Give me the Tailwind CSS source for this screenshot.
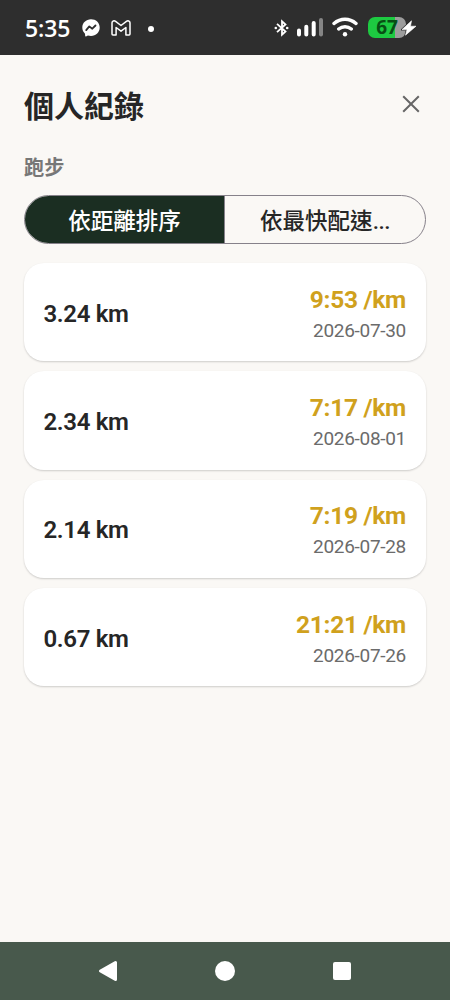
<!DOCTYPE html>
<html lang="zh-Hant">
<head>
<meta charset="utf-8">
<meta name="viewport" content="width=device-width, initial-scale=1">
<title>個人紀錄</title>
<script src="https://cdn.jsdelivr.net/npm/@tailwindcss/browser@4"></script>
</head>
<body class="bg-[#faf8f5]">
<div class="flex h-[1000px] w-[450px] flex-col overflow-hidden bg-[#faf8f5] font-['Roboto','Noto_Sans_CJK_TC',sans-serif] text-[#262626]">
  <header class="flex h-[55px] shrink-0 items-center bg-[#2e2e2e] pl-[25px] text-white">
    <span class="w-[57px] pt-px font-['Open_Sans',sans-serif] text-[23px] leading-[54px] font-semibold tracking-[-0.1px]">5:35</span>
    <svg class="mt-px h-[18px] w-[18px]" viewBox="0 0 18 18"><path fill="#fff" d="M9 .3C4 .3.3 3.900.3 8.600c0 2.500 1 4.600 2.700 6.100l.2 2.400c0 .4.4.6.8.4l1.900-.9c1 .3 2 .4 3.100.4 5 0 8.700-3.600 8.700-8.400S14 .3 9 .3z"/><path d="M4.200 11.100 7.300 7.400 10.300 9.700 13.500 6.500" fill="none" stroke="#2e2e2e" stroke-width="1.800" stroke-linecap="round" stroke-linejoin="round"/></svg>
    <svg class="mt-px ml-[11px] h-4 w-5" viewBox="0 0 20 16" fill="none" stroke="#fff" stroke-width="1.500" stroke-linejoin="round"><path d="M1 2.800C1 .8 3.200.3 4.600 1.400L10 5.500l5.400-4.100C16.800.3 19 .8 19 2.800V14c0 .6-.3.900-.9.900H14.900V7.500L10 11.200 5.100 7.500v7.400H1.900c-.6 0-.9-.3-.9-.9z"/></svg>
    <span class="mt-[2px] ml-[17px] size-[6px] rounded-full bg-white"></span>
    <svg class="ml-[120px] h-[18px] w-4" viewBox="0 0 16 18" fill="none" stroke="#fff" stroke-width="1.800"><path d="M3 4.800 11.500 12.500 8 15.700V2.300l3.500 3.200L3 13.200"/><circle cx="1.800" cy="9" r="1.300" fill="#fff" stroke="none"/><circle cx="13.200" cy="9" r="1.300" fill="#fff" stroke="none"/></svg>
    <svg class="ml-[6px] h-5 w-7" viewBox="0 0 28 20" stroke="#fff" stroke-width="4" stroke-linecap="round"><path d="M3 12.500V16.500M10.300 8.700V16.500M17.700 5V16.500"/><path d="M25 2V16.500" stroke="#858585"/></svg>
    <svg class="mb-px ml-[8px] h-5 w-[26px]" viewBox="0 0 26 20" fill="none" stroke="#fff" stroke-width="3.400" stroke-linecap="round"><path d="M2 6.500C8.500.9 17.500.9 24 6.500M6.700 12c3.700-3.100 8.900-3.100 12.600 0"/><circle cx="13" cy="17.300" r="2.200" fill="#fff" stroke="none"/></svg>
    <div class="relative ml-[10px] h-[21px] w-[49px]">
      <div class="flex h-[21px] w-[38px] items-center justify-center rounded-[7px] bg-linear-to-r from-[#1dca41] from-72% to-[#9c9c9c] to-72% font-['Open_Sans',sans-serif] text-[19px] leading-none font-bold text-[#084f14]">67</div>
      <svg class="absolute top-[3px] left-[33px] h-4 w-4" viewBox="0 0 16 16"><path d="M10.500.8 1 9.600h5L4.500 15.200 15 6.200H9.500z" fill="none" stroke="#2e2e2e" stroke-width="2"/><path d="M10.500.8 1 9.600h5L4.500 15.200 15 6.200H9.500z" fill="#fff" stroke="#fff" stroke-width=".6" stroke-linejoin="round"/></svg>
    </div>
  </header>
  <main class="flex flex-1 flex-col px-6">
    <div class="mt-[29px] flex h-[44px] items-center justify-between">
      <h1 class="text-[30px] leading-[43px] font-bold">個人紀錄</h1>
      <svg class="mr-[6px] mb-[4px] h-[18px] w-[18px]" viewBox="0 0 18 18" fill="none" stroke="#666" stroke-width="2"><path d="M1.200 1.200 16.800 16.800M16.800 1.200 1.200 16.800"/></svg>
    </div>
    <h2 class="mt-[25px] h-[30px] text-[20.200px] leading-[30px] font-semibold text-[#777]">跑步</h2>
    <div class="mt-[12px] flex h-[49px] w-[402px] shrink-0 overflow-hidden rounded-full border border-[#86818a] text-[22.500px] leading-[51px] font-medium">
      <button class="w-[200px] border-r border-[#86818a] bg-[#1b2e22] text-center text-white">依距離排序</button>
      <button class="flex-1 text-center">依最快配速<span class="tracking-[-0.5px]">...</span></button>
    </div>
    <ul class="mt-[19px] flex flex-col gap-[10px]">
      <li class="flex h-[98.300px] items-center justify-between rounded-[20px] bg-white pt-[3px] pr-[20px] pl-[19.500px] shadow-[0_1px_2px_rgba(0,0,0,0.18)]">
        <span class="text-[24px] font-semibold tracking-[-0.35px]">3.24 km</span>
        <div class="pt-[2px] text-right"><div class="text-[24.500px] leading-[32px] font-bold tracking-[-0.3px] text-[#d0a11d]">9:53 /km</div><div class="text-[19px] leading-[30px] tracking-[-0.300px] text-[#6b6b6b]">2026-07-30</div></div>
      </li>
      <li class="flex h-[98.300px] items-center justify-between rounded-[20px] bg-white pt-[3px] pr-[20px] pl-[19.500px] shadow-[0_1px_2px_rgba(0,0,0,0.18)]">
        <span class="text-[24px] font-semibold tracking-[-0.35px]">2.34 km</span>
        <div class="pt-[2px] text-right"><div class="text-[24.500px] leading-[32px] font-bold tracking-[-0.3px] text-[#d0a11d]">7:17 /km</div><div class="text-[19px] leading-[30px] tracking-[-0.300px] text-[#6b6b6b]">2026-08-01</div></div>
      </li>
      <li class="flex h-[98.300px] items-center justify-between rounded-[20px] bg-white pt-[3px] pr-[20px] pl-[19.500px] shadow-[0_1px_2px_rgba(0,0,0,0.18)]">
        <span class="text-[24px] font-semibold tracking-[-0.35px]">2.14 km</span>
        <div class="pt-[2px] text-right"><div class="text-[24.500px] leading-[32px] font-bold tracking-[-0.3px] text-[#d0a11d]">7:19 /km</div><div class="text-[19px] leading-[30px] tracking-[-0.300px] text-[#6b6b6b]">2026-07-28</div></div>
      </li>
      <li class="flex h-[98.300px] items-center justify-between rounded-[20px] bg-white pt-[3px] pr-[20px] pl-[19.500px] shadow-[0_1px_2px_rgba(0,0,0,0.18)]">
        <span class="text-[24px] font-semibold tracking-[-0.35px]">0.67 km</span>
        <div class="pt-[2px] text-right"><div class="text-[24.500px] leading-[32px] font-bold tracking-[-0.3px] text-[#d0a11d]">21:21 /km</div><div class="text-[19px] leading-[30px] tracking-[-0.300px] text-[#6b6b6b]">2026-07-26</div></div>
      </li>
    </ul>
  </main>
  <nav class="flex h-[58px] shrink-0 items-center justify-between bg-[#48594c] pr-[99px] pl-[98px]">
    <svg class="h-[22px] w-5" viewBox="0 0 20 22"><path d="M2.500 11 17.500 2.500v17z" fill="#fff" stroke="#fff" stroke-width="3" stroke-linejoin="round"/></svg>
    <span class="mr-px size-5 rounded-full bg-white"></span>
    <span class="size-[18px] rounded-[2px] bg-white"></span>
  </nav>
</div>
</body>
</html>
